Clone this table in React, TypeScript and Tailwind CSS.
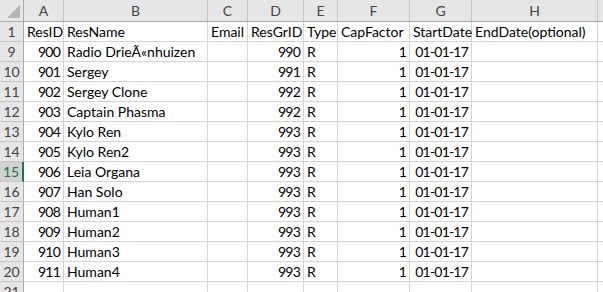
import React from "react";

const cols = ["A", "B", "C", "D", "E", "F", "G", "H"];

type Row = { n: number; cells: string[] };

const names = [
  "Radio DrieÃ«nhuizen",
  "Sergey",
  "Sergey Clone",
  "Captain Phasma",
  "Kylo Ren",
  "Kylo Ren2",
  "Leia Organa",
  "Han Solo",
  "Human1",
  "Human2",
  "Human3",
  "Human4",
];
const grids = ["990", "991", "992", "992", "993", "993", "993", "993", "993", "993", "993", "993"];

const rows: Row[] = [
  { n: 1, cells: ["ResID", "ResName", "Email", "ResGrID", "Type", "CapFactor", "StartDate", "EndDate(optional)"] },
  ...names.map((nm, i) => ({
    n: 9 + i,
    cells: [String(900 + i), nm, "", grids[i], "R", "1", "01-01-17", ""],
  })),
  { n: 21, cells: ["", "", "", "", "", "", "", ""] },
];

const gridCols = "grid grid-cols-[24px_40px_144px_40px_56px_34px_72px_62px_126px_1fr]";

function alignFor(r: Row, ci: number) {
  if (r.n === 1) return "justify-start pl-[3px]";
  if ([0, 3, 5, 6].includes(ci)) return "justify-end pr-[3px] tracking-[-0.8px]";
  return "justify-start pl-[3px]";
}

export default function App() {
  return (
    <div
      className="w-[603px] h-[292px] overflow-hidden bg-white text-[#000] select-none"
      style={{ fontFamily: "Lato, 'Open Sans', sans-serif" }}
    >
      <div className={`${gridCols} h-[22px] bg-[#e6e6e6] border-b border-[#ababab] text-[14px] text-[#444]`}>
        <div className="relative border-r border-[#ababab]">
          <svg className="absolute right-[3px] bottom-[3px]" width="13" height="13" viewBox="0 0 13 13">
            <polygon points="13,0 13,13 0,13" fill="#b4b4b4" />
          </svg>
        </div>
        {cols.map((c) => (
          <div key={c} className="flex items-center justify-center border-r border-[#c6c6c6] leading-none">
            {c}
          </div>
        ))}
        <div />
      </div>
      {rows.map((r) => {
        const sel = r.n === 15;
        return (
          <div key={r.n} className={`${gridCols} h-[20px] text-[14px]`}>
            <div
              className={`flex items-end justify-center pb-[2px] border-b leading-none ${
                sel
                  ? "bg-[#d2d2d2] text-[#217346] border-r-2 border-r-[#217346] border-b-[#c6c6c6]"
                  : "bg-[#e6e6e6] text-[#444] border-r border-r-[#ababab] border-b-[#c6c6c6]"
              }`}
            >
              {r.n}
            </div>
            {r.cells.map((c, ci) => (
              <div
                key={ci}
                className={`flex items-end pb-[2px] whitespace-nowrap overflow-visible border-r border-b border-[#d4d4d4] leading-none ${alignFor(r, ci)}`}
              >
                {c}
              </div>
            ))}
            <div className="border-b border-[#d4d4d4]" />
          </div>
        );
      })}
    </div>
  );
}
